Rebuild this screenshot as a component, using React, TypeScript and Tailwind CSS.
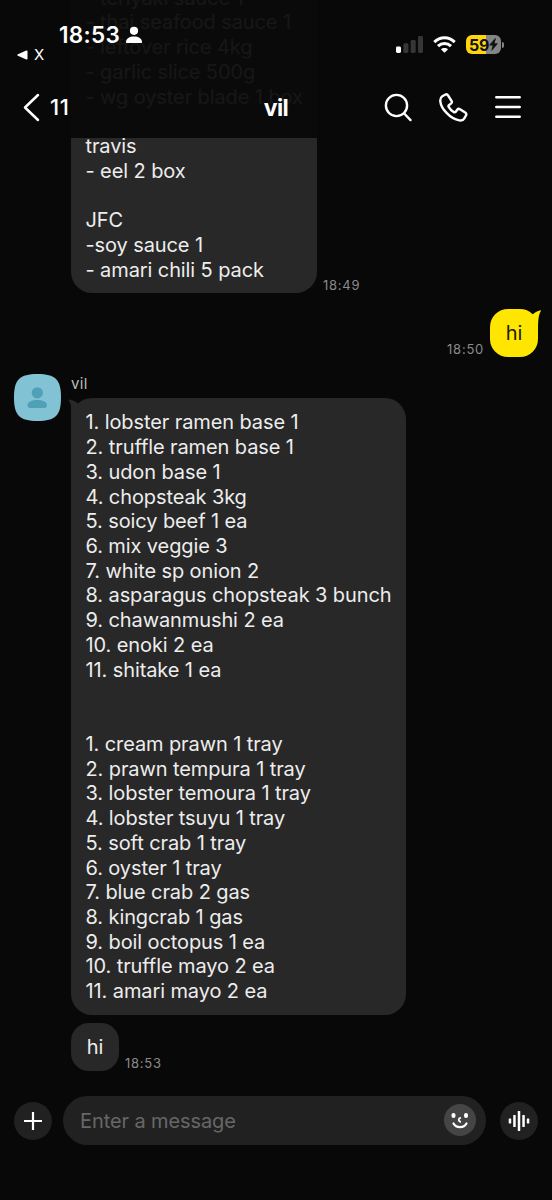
import React from "react";

const stockLines = [
  "- teriyaki sauce 1",
  "- thai seafood sauce 1",
  "- leftover rice 4kg",
  "- garlic slice 500g",
  "- wg oyster blade 1 box",
  "",
  "travis",
  "- eel 2 box",
  "",
  "JFC",
  "-soy sauce 1",
  "- amari chili 5 pack",
];

const orderLines = [
  "1. lobster ramen base 1",
  "2. truffle ramen base 1",
  "3. udon base 1",
  "4. chopsteak 3kg",
  "5. soicy beef 1 ea",
  "6. mix veggie 3",
  "7. white sp onion 2",
  "8. asparagus chopsteak 3 bunch",
  "9. chawanmushi 2 ea",
  "10. enoki 2 ea",
  "11. shitake 1 ea",
  "",
  "",
  "1. cream prawn 1 tray",
  "2. prawn tempura 1 tray",
  "3. lobster temoura 1 tray",
  "4. lobster tsuyu 1 tray",
  "5. soft crab 1 tray",
  "6. oyster 1 tray",
  "7. blue crab 2 gas",
  "8. kingcrab 1 gas",
  "9. boil octopus 1 ea",
  "10. truffle mayo 2 ea",
  "11. amari mayo 2 ea",
];

function Lines({ lines }: { lines: string[] }) {
  return (
    <div className="whitespace-pre text-[20px] leading-[24.74px] tracking-[-0.1px] text-[#ededed]">
      {lines.map((line, i) => (
        <div key={i} className="h-[24.74px]">
          {line}
        </div>
      ))}
    </div>
  );
}

function Time({ children }: { children: string }) {
  return <span className="text-[13px] leading-4 tracking-[0.75px] text-[#8b8b8b]">{children}</span>;
}

function StatusBar() {
  return (
    <div className="flex h-[68px] items-start justify-between">
      <div className="flex flex-col pl-[17px] pt-[21px]">
        <div className="flex h-7 items-center gap-[6px] pl-[42px]">
          <span className="text-[22.5px] font-semibold leading-7 tracking-[0.3px]">18:53</span>
          <svg width="16" height="18" viewBox="0 0 16 18" fill="currentColor">
            <circle cx="8" cy="4.8" r="4.1" />
            <path d="M0 16.2c0-3.6 3.5-5.6 8-5.6s8 2 8 5.6c0 .6-.4.9-1 .9H1c-.6 0-1-.3-1-.9Z" />
          </svg>
        </div>
        <div className="-mt-[2px] flex h-4 items-center gap-[6px]">
          <svg width="11" height="10" viewBox="0 0 11 10" fill="currentColor">
            <path d="M9.3.5.9 4.2c-.8.4-.8 1.200 0 1.600l8.400 3.700c.7.3 1.200 0 1.200-.7V1.200c0-.7-.5-1-1.200-.7Z" />
          </svg>
          <span className="text-[15px] leading-4">X</span>
        </div>
      </div>
      <div className="flex items-center gap-[10px] pr-[48px] pt-[35px]">
        <svg width="27" height="19" viewBox="0 0 27 19">
          <rect x="0" y="11.500" width="5" height="6.500" rx="1.400" fill="#fff" />
          <rect x="7.400" y="8.300" width="5" height="9.700" rx="1.400" fill="#363636" />
          <rect x="14.700" y="4.900" width="5" height="13.100" rx="1.400" fill="#363636" />
          <rect x="22" y="1" width="5" height="17" rx="1.400" fill="#363636" />
        </svg>
        <svg width="23" height="19" viewBox="0 0 23 19" fill="none" stroke="#fff" strokeWidth="3">
          <path d="M1.300 7.100c5.700-5.700 14.700-5.700 20.400 0" />
          <path d="M5 11.200c3.700-3.500 9.300-3.500 13 0" />
          <path d="M7.900 14.300c2-1.900 5.200-1.900 7.200 0l-3 3c-.4.400-.8.400-1.200 0Z" fill="#fff" stroke="none" />
        </svg>
        <div className="flex items-center gap-px">
          <div className="flex h-[19px] w-[35px] items-center justify-center rounded-[6px] bg-linear-to-r from-[#ffd60a] from-[58%] to-[#858585] to-[58%] text-[#111]">
            <span className="text-[16px] font-bold leading-none tracking-[-0.3px]">59</span>
            <svg width="9" height="13" viewBox="0 0 9 13" fill="currentColor">
              <path d="M6.200.3.500 6.800c-.3.400-.1.800.4.800h2.800l-1.300 4.700c-.1.500.3.600.6.300l5.500-6.500c.3-.4.100-.8-.4-.8H5.500L6.900.6c.1-.5-.4-.6-.7-.3Z" />
            </svg>
          </div>
          <div className="h-[6px] w-[2px] rounded-r-full bg-[#858585]" />
        </div>
      </div>
    </div>
  );
}

function ChatHeader() {
  return (
    <div className="grid h-[70px] grid-cols-3 items-center pb-[1px] pt-[10px]">
      <div className="flex items-center gap-[10px] pb-px pl-[23px]">
        <svg width="17" height="29" viewBox="0 0 17 29" fill="none" stroke="currentColor" strokeWidth="2.500" strokeLinecap="round" strokeLinejoin="round">
          <path d="M15 2 2 14.500 15 27" />
        </svg>
        <span className="text-[22px] font-medium leading-7 tracking-[0.6px]">11</span>
      </div>
      <div className="text-center text-[23px] font-bold leading-7 tracking-[-0.6px]">vil</div>
      <div className="flex items-center justify-end gap-[27px] pb-px pr-[31px]">
        <svg width="28" height="29" viewBox="0 0 28 29" fill="none" stroke="currentColor" strokeWidth="2.400" strokeLinecap="round">
          <circle cx="12.500" cy="12.500" r="10.600" />
          <path d="m20.200 20.500 6.300 6.600" />
        </svg>
        <svg width="29" height="29" viewBox="0 0 29 29" fill="none" stroke="currentColor" strokeWidth="2.400" strokeLinejoin="round">
          <path d="M3.300 3.300 6.100 1.700c1.100-.6 2.300-.3 3 .8l3.400 5.300c.6 1 .4 2.100-.5 2.800l-1.900 1.400c-.6.500-.8 1.200-.4 1.900 1.100 2 3.200 4.200 5.200 5.200.7.400 1.400.2 1.900-.4l1.400-1.900c.7-.9 1.900-1.100 2.800-.5l5.200 3.300c1.100.7 1.300 2 .7 3l-1.600 2.700c-1.100 2-3.400 2.500-5.900 1.900-4-.9-8.300-3.600-11.800-7.300C4 16.200 1.700 12.100 1.300 8.300c-.2-2.200.4-4 2-5Z" />
        </svg>
        <svg width="26" height="24" viewBox="0 0 26 24" fill="none" stroke="currentColor" strokeWidth="2.500" strokeLinecap="round">
          <path d="M1.300 2.300h23.400M1.300 12h23.400M1.300 21.700h23.400" />
        </svg>
      </div>
    </div>
  );
}

export default function App() {
  return (
    <div className="relative flex h-[1200px] w-[552px] flex-col overflow-hidden bg-[#080808] font-['Inter','Liberation_Sans',sans-serif] text-white">
      <header className="absolute inset-x-0 top-0 z-10 h-[138px] bg-[#090909]/94">
        <div className="flex flex-col pt-[1px]">
          <div className="-mt-px">
            <StatusBar />
          </div>
          <ChatHeader />
        </div>
      </header>

      <main className="flex flex-col">
        <div className="-mt-[15px] flex items-end gap-[6px] pl-[71px]">
          <div className="h-[307.500px] w-[246px] rounded-b-[21px] bg-[#282828] pl-[14.500px] pt-[0.700px]">
            <Lines lines={stockLines} />
          </div>
          <Time>18:49</Time>
        </div>

        <div className="mt-[16.500px] flex items-end justify-end gap-[6px] pr-[14px]">
          <Time>18:50</Time>
          <div className="relative flex h-12 w-12 items-center justify-center rounded-[18px] bg-[#ffe600]">
            <svg className="absolute left-[38px] top-0" width="14" height="20" viewBox="0 0 14 20" fill="#ffe600">
              <path d="M2 7.500C5 5 8 2.200 12.700 1.200c.3 0 .5.300.3.600C11 5 10 9 10 20H5Z" />
            </svg>
            <span className="relative text-[20px] leading-6 text-[#202000]">hi</span>
          </div>
        </div>

        <div className="mt-[16.500px] flex items-start pl-[14px]">
          <svg width="47" height="47" viewBox="0 0 47 47">
            <path d="M0 23.500C0 5.500 5.500 0 23.500 0S47 5.500 47 23.500 41.500 47 23.500 47 0 41.500 0 23.500Z" fill="#82c2d5" />
            <circle cx="23.300" cy="18.800" r="5.600" fill="#50a0b8" />
            <path d="M13.500 31.200c0-3.500 4.600-5.300 9.800-5.300s9.700 1.800 9.700 5.300c0 2.100-1.400 2.900-3.600 2.900H17.100c-2.200 0-3.600-.8-3.600-2.900Z" fill="#50a0b8" />
          </svg>
          <div className="flex flex-col pl-[10px] pt-px">
            <span className="text-[15px] leading-[18px] tracking-[0.3px] text-[#bdbdbd]">vil</span>
            <div className="relative mt-[5.500px] h-[616.500px] w-[335px] rounded-[21px] bg-[#282828] pl-[14.500px] pt-[12.300px]">
              <svg className="absolute -left-[3px] top-0" width="20" height="22" viewBox="0 0 20 22">
                <path d="M3 22V9C3 6 2 4 .5 2.200c-.3-.4 0-.7.5-.6 3.500.7 6 1.800 8.300 3.400L16 8v14Z" fill="#282828" />
              </svg>
              <div className="relative">
                <Lines lines={orderLines} />
              </div>
            </div>
            <div className="mt-2 flex items-end gap-[6px]">
              <div className="flex h-12 w-12 items-center justify-center rounded-[18px] bg-[#282828] text-[20px] leading-6 text-[#ededed]">hi</div>
              <Time>18:53</Time>
            </div>
          </div>
        </div>
      </main>

      <footer className="mt-auto flex h-[104.500px] items-start px-[14px]">
        <button className="mt-[6px] flex size-[38px] items-center justify-center rounded-full bg-[#212121]">
          <svg width="18" height="18" viewBox="0 0 18 18" stroke="#fff" strokeWidth="2.200">
            <path d="M9 0v18M0 9h18" />
          </svg>
        </button>
        <div className="ml-[11px] flex h-[49px] w-[423px] items-center justify-between rounded-full bg-[#212121] pl-[17px] pr-[10px]">
          <span className="pt-px text-[20px] leading-6 tracking-[-0.1px] text-[#676767]">Enter a message</span>
          <svg width="32" height="32" viewBox="0 0 32 32" fill="none">
            <circle cx="16" cy="16" r="16" fill="#454545" />
            <rect x="7.500" y="9" width="4" height="5" rx="1.900" fill="#fff" />
            <rect x="20" y="9" width="4" height="5" rx="1.900" fill="#fff" />
            <path d="M17 13.800c-3 .1-3 3.900 0 4" stroke="#fff" strokeWidth="1.700" />
            <path d="M9.500 19.500c2.600 4.800 10.400 4.800 13 0" stroke="#fff" strokeWidth="2.200" strokeLinecap="round" />
          </svg>
        </div>
        <button className="ml-[14px] mt-[6px] flex size-[38px] items-center justify-center rounded-full bg-[#212121]">
          <svg width="22" height="20" viewBox="0 0 22 20" fill="#fff">
            <rect x="0.700" y="7.500" width="2.500" height="5" rx=".4" />
            <rect x="5.200" y="4" width="2.500" height="12" rx=".4" />
            <rect x="9.750" y="0" width="2.500" height="20" rx=".4" />
            <rect x="14.300" y="4" width="2.500" height="12" rx=".4" />
            <rect x="18.800" y="7.500" width="2.500" height="5" rx=".4" />
          </svg>
        </button>
      </footer>
    </div>
  );
}
